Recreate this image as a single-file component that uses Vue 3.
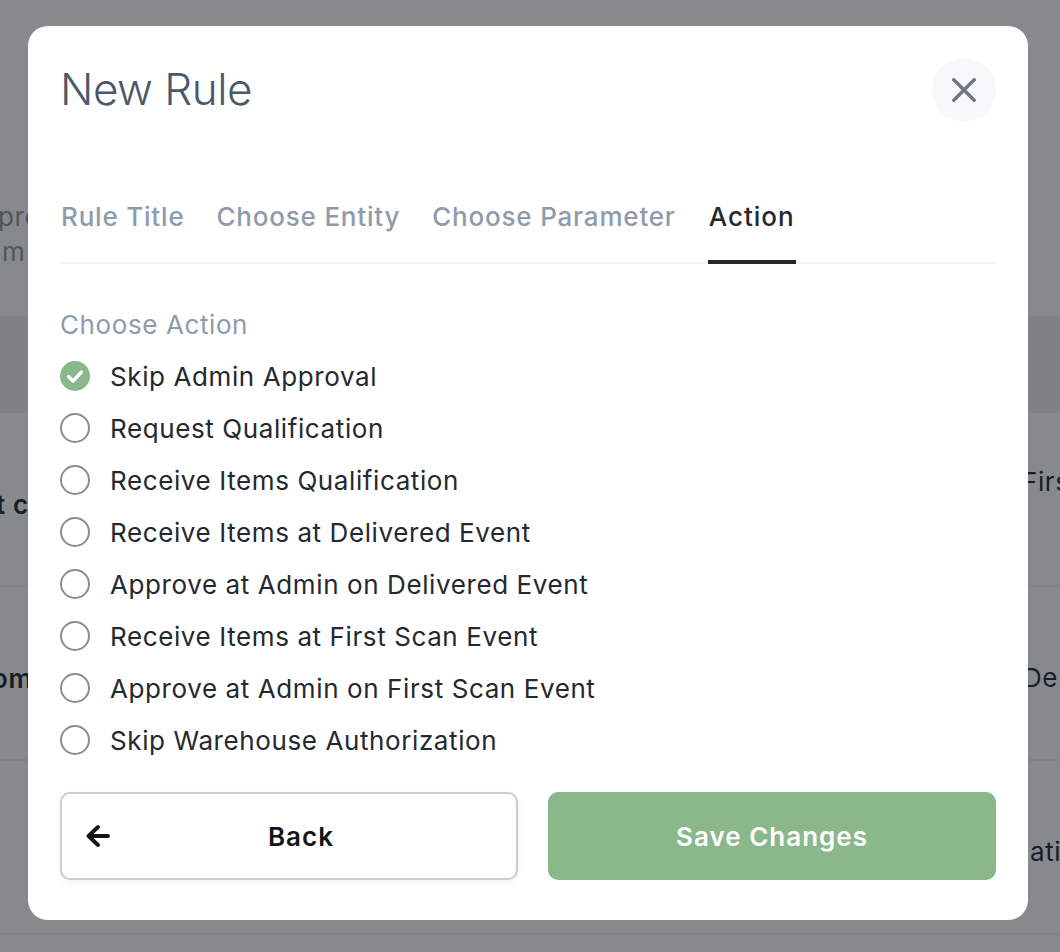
<script setup>
const actions = [
  'Skip Admin Approval',
  'Request Qualification',
  'Receive Items Qualification',
  'Receive Items at Delivered Event',
  'Approve at Admin on Delivered Event',
  'Receive Items at First Scan Event',
  'Approve at Admin on First Scan Event',
  'Skip Warehouse Authorization'
]
const tabs = ['Rule Title', 'Choose Entity', 'Choose Parameter', 'Action']
const rows = [
  { left: 't c', leftX: -4, right: ['Firs', '\u00a0'], rightW: 38 },
  { left: 'om', leftX: -8, right: ['De'], rightW: 37 },
  { left: '', leftX: 0, right: ['ati'], rightW: 30 }
]
</script>

<template>
  <div class="page">
    <div class="intro">
      <div class="intro-a">pro</div>
      <div class="intro-b">m</div>
    </div>
    <div class="band"></div>
    <div v-for="(row, i) in rows" :key="i" class="row">
      <span class="row-left" :style="{ marginLeft: row.leftX + 'px' }">{{ row.left }}</span>
      <span class="row-right" :style="{ width: row.rightW + 'px' }">
        <span v-for="line in row.right" :key="line" class="line">{{ line }}</span>
      </span>
    </div>
    <div class="overlay"></div>
    <div class="modal">
      <div class="head">
        <h1 class="title">New Rule</h1>
        <button class="close" type="button" aria-label="Close">
          <svg width="24" height="24" viewBox="0 0 24 24" fill="none" stroke="#6b7683" stroke-width="3.4" stroke-linecap="round">
            <path d="M1.8 1.8 22.2 22.2M22.2 1.8 1.8 22.2" />
          </svg>
        </button>
      </div>
      <div class="tabs">
        <div v-for="(tab, i) in tabs" :key="tab" class="tab" :class="{ active: i === 3 }">{{ tab }}</div>
      </div>
      <div class="label">Choose Action</div>
      <ul class="list">
        <li v-for="(action, i) in actions" :key="action" class="item">
          <svg v-if="i === 0" class="radio" width="30" height="30" viewBox="0 0 30 30">
            <circle cx="15" cy="15" r="15" fill="#8ab88a" />
            <path d="M8.5 15.5 13 20 21.5 11" fill="none" stroke="#fff" stroke-width="3.4" stroke-linecap="round" stroke-linejoin="round" />
          </svg>
          <svg v-else class="radio" width="30" height="30" viewBox="0 0 30 30">
            <circle cx="15" cy="15" r="14" fill="none" stroke="#8a8d91" stroke-width="2" />
          </svg>
          <span>{{ action }}</span>
        </li>
      </ul>
      <div class="actions">
        <button class="btn back" type="button">
          <svg class="arrow" width="24" height="24" viewBox="0 0 24 24" fill="none" stroke="#11151a" stroke-width="3.8" stroke-linecap="round" stroke-linejoin="round">
            <path d="M22 12H3M12 3 2.5 12 12 21" />
          </svg>
          <span class="back-label">Back</span>
        </button>
        <button class="btn save" type="button">Save Changes</button>
      </div>
    </div>
  </div>
</template>

<style>
html, body { margin: 0; background: #fff; }
</style>

<style scoped>
.page {
  position: relative;
  width: 1060px;
  height: 952px;
  overflow: hidden;
  background: #fff;
  font-family: Inter, "Liberation Sans", sans-serif;
  color: #1f2933;
  font-size: 26px;
  letter-spacing: 0.6px;
}
.intro {
  height: 316px;
  box-sizing: border-box;
  padding-top: 199px;
  line-height: 35px;
  color: #8f959b;
}
.intro-a { margin-left: -2px; }
.intro-b { margin-left: 2px; }
.band { height: 97px; background: #eff0f1; }
.row {
  height: 174px;
  box-sizing: border-box;
  border-bottom: 2px solid #f5efeb;
  display: flex;
  justify-content: space-between;
  align-items: center;
  padding-top: 10px;
  white-space: nowrap;
}
.row-left { font-weight: 600; }
.row-right { display: flex; flex-direction: column; line-height: 44px; }
.line { display: block; }
.overlay {
  position: absolute;
  inset: 0;
  background: rgba(16, 22, 26, 0.5);
}
.modal {
  position: absolute;
  left: 28px;
  top: 26px;
  width: 1000px;
  height: 894px;
  box-sizing: border-box;
  padding: 32px;
  background: #fff;
  border-radius: 20px;
  display: flex;
  flex-direction: column;
}
.head {
  display: flex;
  justify-content: space-between;
  align-items: flex-start;
  height: 64px;
}
.title {
  margin: 0;
  font-size: 44px;
  line-height: 62px;
  font-weight: 300;
  color: #4a5a6a;
  letter-spacing: -0.5px;
}
.close {
  width: 64px;
  height: 64px;
  border: 0;
  padding: 0;
  border-radius: 50%;
  background: #f7f8fa;
  display: flex;
  align-items: center;
  justify-content: center;
}
.tabs {
  margin-top: 54px;
  display: flex;
  gap: 30px;
  border-bottom: 2px solid #fbeee6;
  height: 88px;
  box-sizing: border-box;
}
.tab {
  height: 88px;
  box-sizing: border-box;
  padding: 0 1px;
  line-height: 82px;
  font-weight: 500;
  letter-spacing: 0.8px;
  color: #8d9bac;
}
.tab.active {
  margin-left: 1px;
  color: #24292f;
  letter-spacing: 1px;
  border-bottom: 4px solid #24292f;
}
.label {
  margin-top: 43px;
  line-height: 36px;
  color: #8d9bac;
}
.list {
  list-style: none;
  margin: 7px 0 0;
  padding: 0;
}
.item {
  height: 52px;
  display: flex;
  align-items: center;
  gap: 20px;
  color: #24292f;
  white-space: nowrap;
}
.radio { flex: none; }
.actions {
  margin-top: 26px;
  display: flex;
  gap: 30px;
}
.btn {
  flex: 1;
  height: 88px;
  box-sizing: border-box;
  border-radius: 10px;
  font-family: inherit;
  font-size: 26px;
  font-weight: 600;
  letter-spacing: 1px;
}
.back {
  background: #fff;
  border: 2px solid #c9cdd1;
  color: #11151a;
  box-shadow: 0 2px 6px rgba(20, 30, 40, 0.06);
  flex: 0 0 458px;
  display: flex;
  align-items: center;
  padding: 0 24px;
}
.back-label { flex: 1; text-align: center; }
.arrow { flex: none; }
.save {
  background: #8ab88a;
  border: 0;
  color: #fff;
}
</style>
